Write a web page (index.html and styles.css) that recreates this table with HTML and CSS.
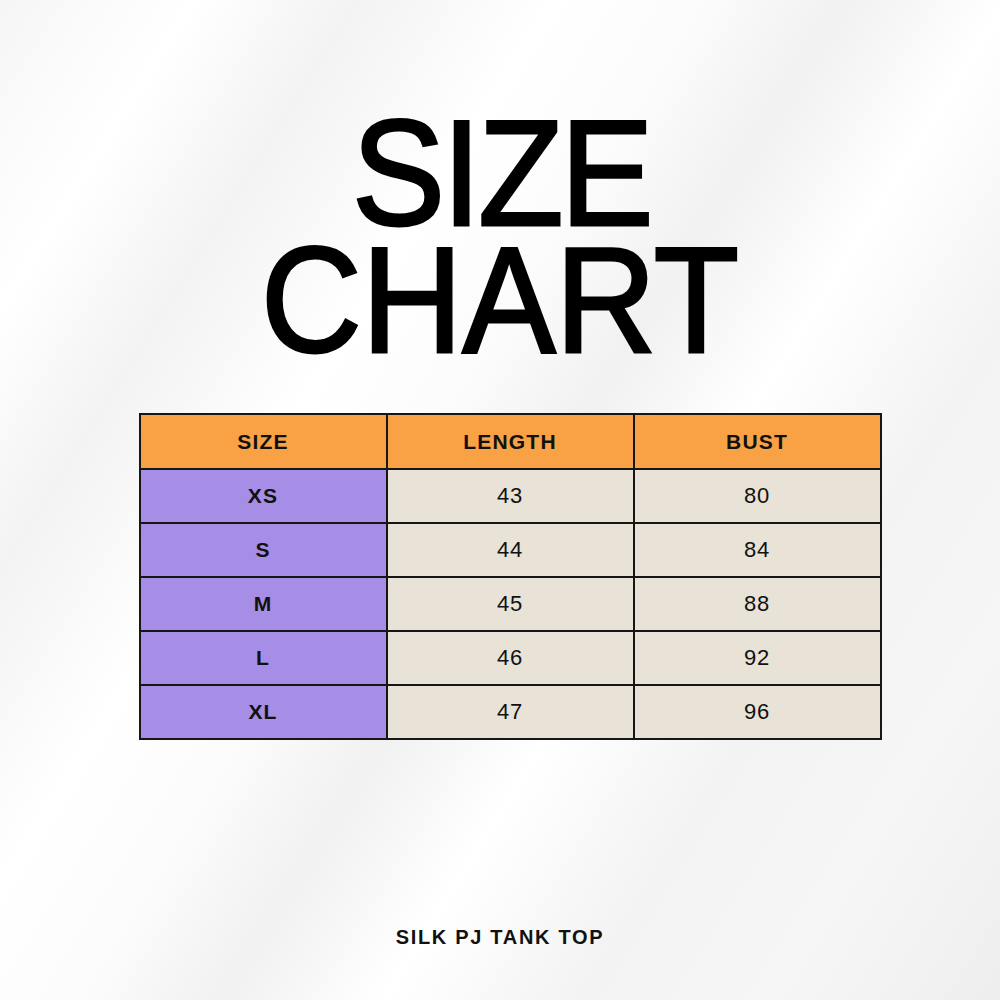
FILE: index.html
```html
<!DOCTYPE html>
<html>
<head>
<meta charset="utf-8">
<link rel="stylesheet" href="styles.css">
</head>
<body>
<main class="page">
  <h1 class="title"><span class="title-line title-size">SIZE</span><span class="title-line title-chart">CHART</span></h1>
  <table class="chart">
    <thead>
      <tr><th>SIZE</th><th>LENGTH</th><th>BUST</th></tr>
    </thead>
    <tbody>
      <tr><th class="size">XS</th><td>43</td><td>80</td></tr>
      <tr><th class="size">S</th><td>44</td><td>84</td></tr>
      <tr><th class="size">M</th><td>45</td><td>88</td></tr>
      <tr><th class="size">L</th><td>46</td><td>92</td></tr>
      <tr><th class="size">XL</th><td>47</td><td>96</td></tr>
    </tbody>
  </table>
  <p class="product">SILK PJ TANK TOP</p>
</main>
</body>
</html>
```
FILE: styles.css
```css
html, body {
  margin: 0;
  padding: 0;
}
body {
  width: 1000px;
  height: 1000px;
  overflow: hidden;
  font-family: "Liberation Sans", Arial, sans-serif;
  color: #111;
  background-color: #f3f3f3;
  background-image:
    linear-gradient(122deg,
      #f6f6f6 0%, #ffffff 12%, #f3f3f3 22%, #ffffff 34%,
      #fbfbfb 44%, #f1f1f1 52%, #ffffff 62%, #f3f3f3 74%,
      #f6f6f6 86%, #eeeeee 100%);
}
.page {
  display: flex;
  flex-direction: column;
  align-items: center;
  padding-top: 110px;
}
.title {
  margin: 0;
  display: flex;
  flex-direction: column;
  align-items: center;
  font-size: 150px;
  font-weight: 400;
  color: #000;
  -webkit-text-stroke: 3px #000;
  transform: scaleX(0.93);
}
.title-line {
  display: block;
  height: 127px;
  line-height: 127px;
}
.title-size {
  letter-spacing: -3px;
  padding-left: 3px;
}
.title-chart {
  letter-spacing: 0;
}
.chart {
  margin-top: 49px;
  margin-left: 20px;
  width: 743px;
  border-collapse: collapse;
  table-layout: fixed;
  border: 2px solid #161616;
}
.chart th, .chart td {
  border: 2px solid #161616;
  height: 52px;
  padding: 0;
  text-align: center;
  vertical-align: middle;
  font-size: 21px;
}
.chart thead th {
  background: #f8a145;
  font-weight: 700;
  letter-spacing: 1.2px;
  height: 53px;
}
.chart .size {
  background: #a68de5;
  font-weight: 700;
  letter-spacing: 1.2px;
}
.chart td {
  background: #e8e2d7;
  font-weight: 400;
  letter-spacing: 0.8px;
  font-size: 22px;
}
.product {
  margin: 185px 0 0 0;
  font-size: 20px;
  line-height: 24px;
  font-weight: 700;
  letter-spacing: 1.7px;
  color: #111;
}
```
